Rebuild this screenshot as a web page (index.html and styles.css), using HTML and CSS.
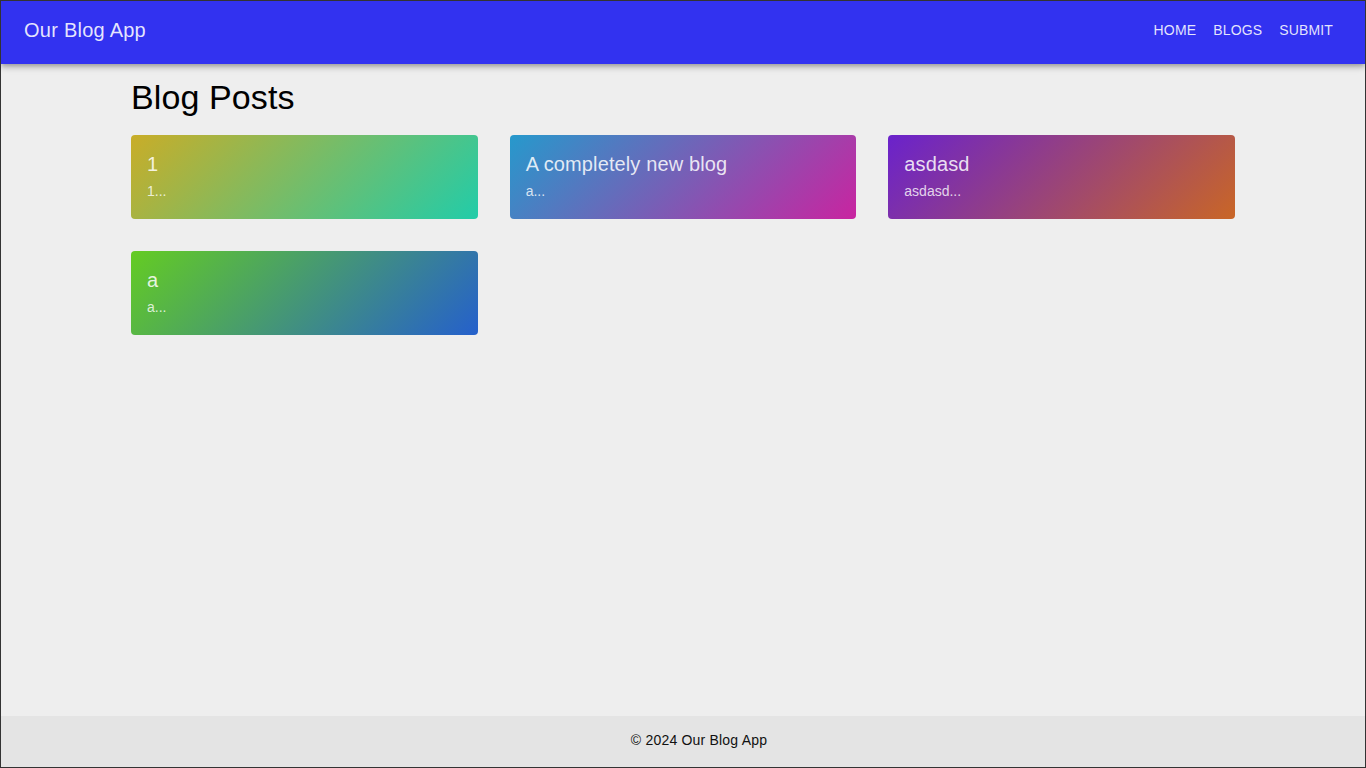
FILE: index.html
```html
<!DOCTYPE html>
<html lang="en">
<head>
<meta charset="utf-8">
<title>Our Blog App</title>
<link rel="stylesheet" href="styles.css">
</head>
<body>
  <header class="appbar">
    <div class="brand">Our Blog App</div>
    <nav class="nav">
      <a class="nav-link" href="#">Home</a>
      <a class="nav-link" href="#">Blogs</a>
      <a class="nav-link" href="#">Submit</a>
    </nav>
  </header>
  <main class="main">
    <h1 class="page-title">Blog Posts</h1>
    <div class="grid">
      <div class="card card-1">
        <h2 class="card-title">1</h2>
        <p class="card-text">1...</p>
      </div>
      <div class="card card-2">
        <h2 class="card-title">A completely new blog</h2>
        <p class="card-text">a...</p>
      </div>
      <div class="card card-3">
        <h2 class="card-title">asdasd</h2>
        <p class="card-text">asdasd...</p>
      </div>
      <div class="card card-4">
        <h2 class="card-title">a</h2>
        <p class="card-text">a...</p>
      </div>
    </div>
  </main>
  <footer class="footer">© 2024 Our Blog App</footer>
</body>
</html>
```

FILE: styles.css
```css
* { box-sizing: border-box; }
html, body { height: 100%; }
body {
  margin: 0;
  border: 1px solid #333333;
  background: #eeeeee;
  font-family: "Liberation Sans", Arial, sans-serif;
  color: #000;
  display: flex;
  flex-direction: column;
  min-height: 100vh;
}
.appbar {
  height: 63px;
  flex-shrink: 0;
  background: #3232f0;
  display: flex;
  align-items: center;
  justify-content: space-between;
  padding: 0 24px 6px 23px;
  box-shadow: 0 2px 4px -1px rgba(0,0,0,0.2), 0 4px 5px 0 rgba(0,0,0,0.14), 0 1px 10px 0 rgba(0,0,0,0.12);
  position: relative;
  z-index: 1;
}
.brand {
  font-size: 20px;
  letter-spacing: 0.25px;
  color: rgba(255,255,255,0.88);
  line-height: 30px;
}
.nav { display: flex; gap: 1px; }
.nav-link {
  color: rgba(255,255,255,0.88);
  text-decoration: none;
  text-transform: uppercase;
  font-size: 14px;
  letter-spacing: 0.15px;
  line-height: 20px;
  padding: 6px 8px;
}
.main {
  flex: 1;
  width: 1104px;
  margin: 0 auto;
  padding-top: 12px;
}
.page-title {
  margin: 0 0 17px;
  font-size: 34px;
  letter-spacing: 0.1px;
  line-height: 42px;
  font-weight: 400;
}
.grid {
  display: grid;
  grid-template-columns: repeat(3, 1fr);
  gap: 32px;
}
.card {
  height: 84px;
  border-radius: 4px;
  padding: 16px 16px 0;
  color: rgba(255,255,255,0.85);
}
.card-1 { background: linear-gradient(135deg, #c9ad28 0%, #22cca9 100%); }
.card-2 { background: linear-gradient(135deg, #2699cc 0%, #c924a0 100%); }
.card-3 { background: linear-gradient(135deg, #6a22cc 0%, #c96626 100%); }
.card-4 { background: linear-gradient(135deg, #64cc22 0%, #2560cc 100%); }
.card-title {
  margin: 0 0 3px;
  font-size: 20px;
  line-height: 27px;
  font-weight: 400;
  letter-spacing: 0.12px;
}
.card-text {
  margin: 0;
  font-size: 14px;
  line-height: 20px;
  color: rgba(255,255,255,0.8);
}
.footer {
  flex-shrink: 0;
  background: #e4e4e4;
  text-align: center;
  font-size: 14px;
  letter-spacing: 0.2px;
  line-height: 19px;
  padding: 15px 0 17px 32px;
  color: #111;
}
```
